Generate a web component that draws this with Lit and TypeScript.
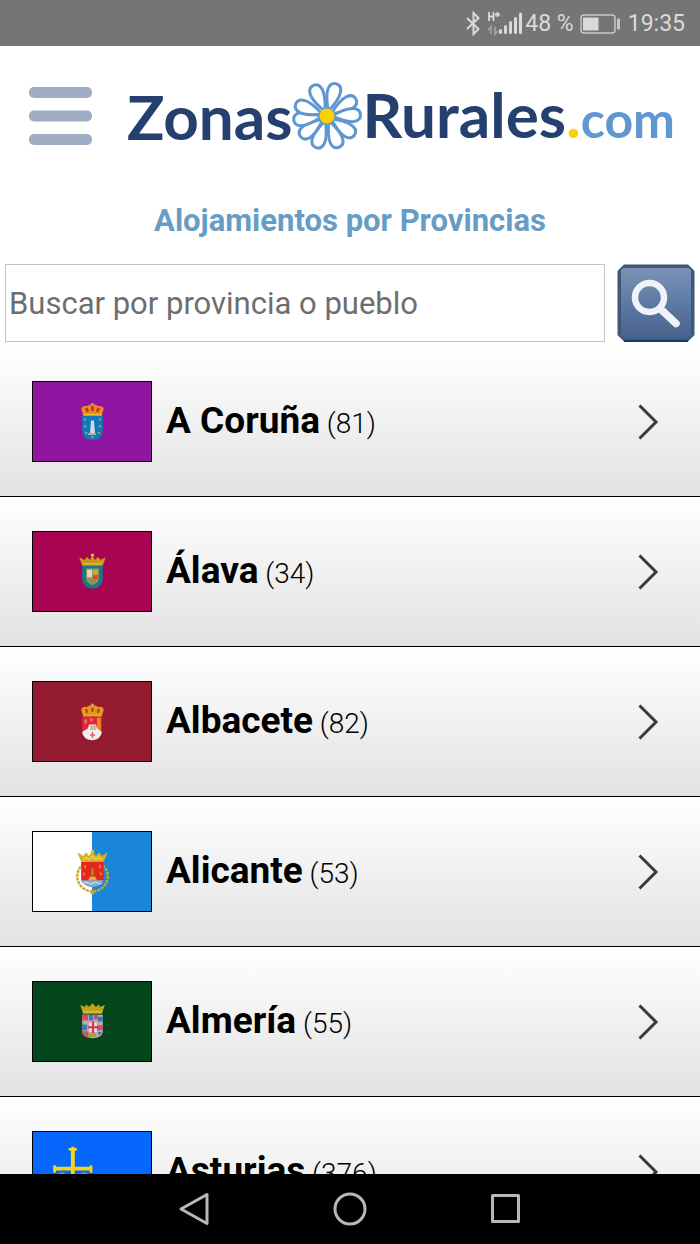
import { LitElement, html, css, svg, SVGTemplateResult } from "lit";
import { customElement, property } from "lit/decorators.js";

type Province = { name: string; count: number; flag: string };

const PROVINCES: Province[] = [
  { name: "A Coruña", count: 81, flag: "coruna" },
  { name: "Álava", count: 34, flag: "alava" },
  { name: "Albacete", count: 82, flag: "albacete" },
  { name: "Alicante", count: 53, flag: "alicante" },
  { name: "Almería", count: 55, flag: "almeria" },
  { name: "Asturias", count: 376, flag: "asturias" },
];

const FLAGS: Record<string, SVGTemplateResult> = {
  coruna: svg`
    <rect width="120" height="82" fill="#9016a2"/>
    <path d="M50 46v15q0 10 10.500 10.500q10.500-.5 10.500-10.500v-15z" transform="translate(0 -11)" fill="#1377c0"/>
    <path d="M58 53l1-13h3l1 13z" fill="#cfdbe6"/>
    <path d="M56 53h8v2h-8z" fill="#9fb6c4"/>
    <g fill="#8fae3c"><circle cx="53" cy="39" r="1.300"/><circle cx="68" cy="39" r="1.300"/><circle cx="53" cy="46" r="1.300"/><circle cx="68" cy="46" r="1.300"/><circle cx="54" cy="53" r="1.300"/><circle cx="67" cy="53" r="1.300"/><circle cx="60.500" cy="57" r="1.300"/></g>
    <path d="M51 34l-2-6q1-4 6-3q2-2 5.500-2t5.500 2q5-1 6 3l-2 6z" fill="#e58a1c"/>
    <path d="M54 27l2 4M60.500 25v5M67 27l-2 4" stroke="#d92323" stroke-width="2.500"/>
    <path d="M51 34h19" stroke="#f0bd28" stroke-width="2"/>
    <circle cx="60.500" cy="23" r="1.200" fill="#cdb06a"/>`,
  alava: svg`
    <rect width="120" height="82" fill="#a80451"/>
    <path d="M50 35h21v14q-1 9-10.500 10q-9.500-1-10.500-10z" fill="#18788b"/>
    <path d="M54 38h13v10q-1 6-6.500 7q-5.500-1-6.500-7z" fill="#9d9254"/>
    <path d="M55 39h5v8h-5z" fill="#dfd6bf"/>
    <path d="M61 45h5v4h-5z" fill="#dd482d"/>
    <path d="M61 39h5v5h-5z" fill="#d9a52b"/>
    <path d="M56 49h9l-4 4z" fill="#69a054"/>
    <path d="M50 35l-3-9 5 3 3-3 3 3 2.500-5 2.500 5 3-3 3 3 5-3-3 9z" fill="#c9961f"/>
    <circle cx="60.500" cy="24" r="1.800" fill="#e7bb2c"/>
    <path d="M51 33h19" stroke="#e7bb2c" stroke-width="1.500"/>`,
  albacete: svg`
    <rect width="120" height="82" fill="#951b31"/>
    <path d="M50 36h20v15q-1 9-10 9.500q-9-.5-10-9.500z" fill="#e22535"/>
    <path d="M65 37h4v15h-4z" fill="#e58b1d"/>
    <path d="M50 52l6-4 1-4h7l1 4 5 4q-1 8-10 8.500q-9-.5-10-8.500z" fill="#f2edf0"/>
    <path d="M58 45h6v5h-6z" fill="#c4c09b"/>
    <path d="M60.500 52v6M58 55h5" stroke="#e05a66" stroke-width="1.500"/>
    <path d="M52 39h3v4h-3zM58 38h3v3h-3z" fill="#ef6571"/>
    <path d="M51 35l-2-6q1-4 6-3q2-2 5.500-2t5.500 2q5-1 6 3l-2 6z" fill="#e29a1b"/>
    <path d="M54 28l1 4M60.500 27v4M67 28l-1 4" stroke="#b83118" stroke-width="2"/>
    <path d="M51 35h19" stroke="#f0ae22" stroke-width="1.500"/>
    <circle cx="60.500" cy="23.500" r="1.200" fill="#c9b6a1"/>`,
  alicante: svg`
    <rect width="120" height="82" fill="#fff"/>
    <rect x="60" width="60" height="82" fill="#1a86d9"/>
    <circle cx="60.500" cy="46" r="15.500" fill="none" stroke="#c8a835" stroke-width="2.500" stroke-dasharray="3 1"/>
    <circle cx="60.500" cy="63" r="2" fill="#d2aa2d"/>
    <path d="M49 31h23v19q-2 6-11.500 7q-9.500-1-11.500-7z" fill="#e32620"/>
    <path d="M49 50h23q-2 6-11.500 7q-9.500-1-11.500-7z" fill="#79b2dc"/>
    <path d="M56 50l2-4h5l2 4z" fill="#dfad43"/>
    <path d="M57 37h7v9h-7z" fill="#c63b20"/>
    <path d="M53 34v4M68 34v4M60.500 38v7M52 42v3M69 42v3" stroke="#ed7a27" stroke-width="2"/>
    <path d="M51 53q3-2 5 0t5 0 5 0 4 0" fill="none" stroke="#e3eef4"/>
    <path d="M49 31l-4-10 6 4 3-4 3 4 3.500-6 3.500 6 3-4 3 4 6-4-4 10z" fill="#d8af23"/>
    <path d="M51 29l3-3 3 3 3.500-4 3.500 4 3-3 3 3" fill="none" stroke="#f1d553" stroke-width="1.200"/>
    <circle cx="60.500" cy="20" r="1.800" fill="#e3bd2b"/>`,
  almeria: svg`
    <rect width="120" height="82" fill="#04461c"/>
    <path d="M50 34h21v18q-1 6-10.500 6.500q-9.500-.5-10.500-6.500z" fill="#b8aaa9"/>
    <path d="M50 34h6v6h-6zM62 34h4v5h-4zM65 45h6v5h-6zM50 51h6l2 7q-7-1-8-5z" fill="#d24d68"/>
    <path d="M57 34h4v6h-4zM66 36h5v5h-5zM50 44h5v6h-5zM66 52h4l-3 4z" fill="#3a78b0"/>
    <path d="M57 42h8v10h-8z" fill="#e4dadd"/>
    <path d="M61 41v12M56 47h10" stroke="#df2d43" stroke-width="2"/>
    <path d="M56 53h8v4h-8z" fill="#a9a431"/>
    <path d="M51 33l-3-9 5 2 1-3 3 3 3.500-4 3.500 4 3-3 1 3 5-2-3 9z" fill="#bfa41b"/>
    <path d="M51 31h19" stroke="#e0c624" stroke-width="1.500"/>`,
  asturias: svg`
    <rect width="120" height="82" fill="#0667fc"/>
    <g stroke="#f6d516" stroke-width="4" stroke-linecap="round">
      <path d="M40.500 17v48M23 38h35"/>
      <path d="M37.500 18h6M22 36v5M59 36v5M37.500 64h6" stroke-width="3"/>
    </g>
    <path d="M32 43h-4l3 5M49 43h4l-3 5" fill="none" stroke="#69a496" stroke-width="2"/>`,
};

@customElement("province-row")
class ProvinceRow extends LitElement {
  @property({ attribute: false }) province!: Province;

  static styles = css`
    :host {
      display: block;
    }
    .row {
      display: flex;
      align-items: center;
      box-sizing: border-box;
      height: 150px;
      padding: 0 40px 0 32px;
      border-bottom: 1px solid #000;
      background: linear-gradient(#fff, #e2e2e2);
      color: #000;
      text-decoration: none;
    }
    .flag {
      flex: none;
      width: 118px;
      height: 79px;
      border: 1px solid #000;
    }
    .label {
      flex: 1;
      padding: 2px 0 0 14px;
      font-size: 28px;
      line-height: 44px;
      font-weight: 300;
    }
    .name {
      font-size: 37px;
      font-weight: 700;
    }
    .chevron {
      flex: none;
      width: 24px;
      height: 40px;
    }
  `;

  render() {
    const p = this.province;
    return html`<a class="row" href="#${p.flag}">
      <svg class="flag" viewBox="0 0 120 82" preserveAspectRatio="none" aria-hidden="true">${FLAGS[p.flag]}</svg>
      <span class="label"><span class="name">${p.name}</span> (${p.count})</span>
      <svg class="chevron" viewBox="0 0 24 40" aria-hidden="true">
        <path d="M3.500 3.500L20 20L3.500 36.500" fill="none" stroke="#3a3a3a" stroke-width="3"/>
      </svg>
    </a>`;
  }
}

@customElement("app-root")
class AppRoot extends LitElement {
  static styles = css`
    :host {
      display: flex;
      flex-direction: column;
      height: 100vh;
      overflow: hidden;
      background: #fff;
      font-family: Roboto, "Liberation Sans", sans-serif;
    }
    .status {
      flex: none;
      display: flex;
      align-items: center;
      justify-content: flex-end;
      box-sizing: border-box;
      height: 46px;
      padding: 2px 15px 0 0;
      background: #757575;
      color: #dadada;
      font-size: 23px;
      line-height: 28px;
    }
    .status-icons {
      width: 60px;
      height: 28px;
    }
    .battery {
      width: 40px;
      height: 20px;
      margin: 0 8px 0 6px;
    }
    .page {
      flex: 1;
      min-height: 0;
      overflow: hidden;
    }
    .header {
      display: flex;
      align-items: center;
      height: 140px;
      padding: 0 25px 0 29px;
    }
    .menu {
      flex: none;
      padding: 0;
      border: 0;
      background: none;
      width: 64px;
      height: 58px;
    }
    .menu svg,
    .find svg {
      display: block;
      width: 100%;
      height: 100%;
    }
    .logo {
      flex: 1;
      display: flex;
      align-items: center;
      justify-content: flex-end;
      color: #25406f;
      font-family: Lato, sans-serif;
      font-size: 62px;
      line-height: 80px;
      font-weight: 700;
      text-decoration: none;
    }
    .daisy {
      flex: none;
      width: 76px;
      height: 72px;
      margin: 0 -3px;
    }
    .dot {
      color: #fdd000;
    }
    .com {
      color: #5f97d2;
      font-size: 50px;
    }
    .title {
      margin: 14px 0 22px;
      color: #679cc4;
      font-size: 31px;
      line-height: 42px;
      font-weight: 700;
      text-align: center;
    }
    .search {
      display: flex;
      gap: 12px;
      padding: 0 5px;
      margin-bottom: 5px;
    }
    .query {
      flex: 1;
      min-width: 0;
      box-sizing: border-box;
      height: 78px;
      padding: 0 3px;
      border: 1px solid #c4c4c4;
      border-radius: 0;
      background: #fff;
      color: #222;
      font: 400 31px Roboto, sans-serif;
    }
    .query::placeholder {
      color: #6e6e6e;
      opacity: 1;
    }
    .find {
      flex: none;
      width: 78px;
      height: 78px;
      padding: 0;
      border: 0;
      background: none;
    }
    .provinces {
      margin: 0;
      padding: 0;
      list-style: none;
    }
    .system {
      flex: none;
      display: flex;
      justify-content: center;
      align-items: center;
      gap: 116px;
      height: 70px;
      background: #000;
    }
    .key {
      width: 40px;
      height: 40px;
      padding: 0;
      border: 0;
      background: none;
    }
    .key svg {
      display: block;
      width: 40px;
      height: 40px;
      fill: none;
      stroke: #b8b8b8;
      stroke-width: 3;
      stroke-linejoin: round;
    }
  `;

  private petals() {
    return [16, 59, 88, 125, 159, 199, 232, 263, 291, 336].map(
      (angle) => svg`<path transform="rotate(${angle} 37 36)"
        d="M37 31C34 25 30 16 30.500 9.500C31 4.500 34 2.500 37 2.500C40 2.500 43 4.500 43.500 9.500C44 16 40 25 37 31Z"/>`
    );
  }

  render() {
    return html`
      <div class="status">
        <svg class="status-icons" viewBox="0 0 60 28" aria-hidden="true">
          <path d="M2 8L13.500 19L8.500 24V3L13.500 8L2 19" fill="none" stroke="#dadada" stroke-width="2"/>
          <path d="M24 2v9M28.500 2v9M24 6.500h4.500M30 4.500h5M32.500 2v5" fill="none" stroke="#dadada" stroke-width="1.800"/>
          <path d="M26 24v-7l-3 3M30 17v7l3-3" fill="none" stroke="#a0a0a0" stroke-width="1.800"/>
          <path d="M35.500 20.500v2M40.500 16.500v6M45.500 12.500v10M50.500 8.500v14M55.500 4v18.500" stroke="#dadada" stroke-width="3" stroke-linecap="round"/>
        </svg>
        <span>48 %</span>
        <svg class="battery" viewBox="0 0 40 20" aria-hidden="true">
          <rect x="1" y="1" width="34" height="18" rx="3" fill="none" stroke="#c8c8c8" stroke-width="1.500"/>
          <rect x="3" y="3.500" width="15.500" height="13" fill="#dadada"/>
          <rect x="37" y="4.500" width="3" height="11" rx="1" fill="#c8c8c8"/>
        </svg>
        <span>19:35</span>
      </div>
      <main class="page">
        <header class="header">
          <button class="menu" type="button" aria-label="Menú">
            <svg viewBox="0 0 64 58">
              <g fill="#9fadc4">
                <rect width="63" height="11" rx="5"/>
                <rect y="23.500" width="63" height="11" rx="5"/>
                <rect y="47" width="63" height="11" rx="5"/>
              </g>
            </svg>
          </button>
          <a class="logo" href="#inicio">
            <span>Zonas</span>
            <svg class="daisy" viewBox="0 0 74 72" aria-hidden="true">
              <g fill="#fff" stroke="#5f97d2" stroke-width="3">${this.petals()}</g>
              <circle cx="37" cy="36" r="7.500" fill="#fdd000"/>
            </svg>
            <span>Rurales<span class="dot">.</span><span class="com">com</span></span>
          </a>
        </header>
        <h1 class="title">Alojamientos por Provincias</h1>
        <form class="search" @submit=${(e: Event) => e.preventDefault()}>
          <input class="query" type="text" aria-label="Buscar por provincia o pueblo" placeholder="Buscar por provincia o pueblo" />
          <button class="find" type="submit" aria-label="Buscar">
            <svg viewBox="0 0 78 78">
              <defs>
                <linearGradient id="face" x2="0" y2="1">
                  <stop offset="0" stop-color="#7b93b6"/>
                  <stop offset=".5" stop-color="#5c7aa4"/>
                  <stop offset="1" stop-color="#48618a"/>
                </linearGradient>
              </defs>
              <path d="M7 .5H71L77.500 7V71L71 77.500H7L.5 71V7Z" fill="#3f5779"/>
              <rect x="4" y="4" width="70" height="71" rx="4" fill="url(#face)"/>
              <path d="M7 77H71" stroke="#173b6d" stroke-width="2"/>
              <circle cx="32.500" cy="33.500" r="14.500" fill="none" stroke="#f0f4f8" stroke-width="6.500"/>
              <path d="M43.500 45L59 59.500" stroke="#f0f4f8" stroke-width="7.500" stroke-linecap="round"/>
            </svg>
          </button>
        </form>
        <ul class="provinces">
          ${PROVINCES.map((p) => html`<li><province-row .province=${p}></province-row></li>`)}
        </ul>
      </main>
      <nav class="system" aria-label="Sistema">
        <button class="key" type="button" aria-label="Atrás">
          <svg viewBox="0 0 40 40"><path d="M33 5.500V34.500L7 20Z"/></svg>
        </button>
        <button class="key" type="button" aria-label="Inicio">
          <svg viewBox="0 0 40 40"><circle cx="20" cy="20" r="15"/></svg>
        </button>
        <button class="key" type="button" aria-label="Recientes">
          <svg viewBox="0 0 40 40"><rect x="6.500" y="6.500" width="26" height="26"/></svg>
        </button>
      </nav>
    `;
  }
}
